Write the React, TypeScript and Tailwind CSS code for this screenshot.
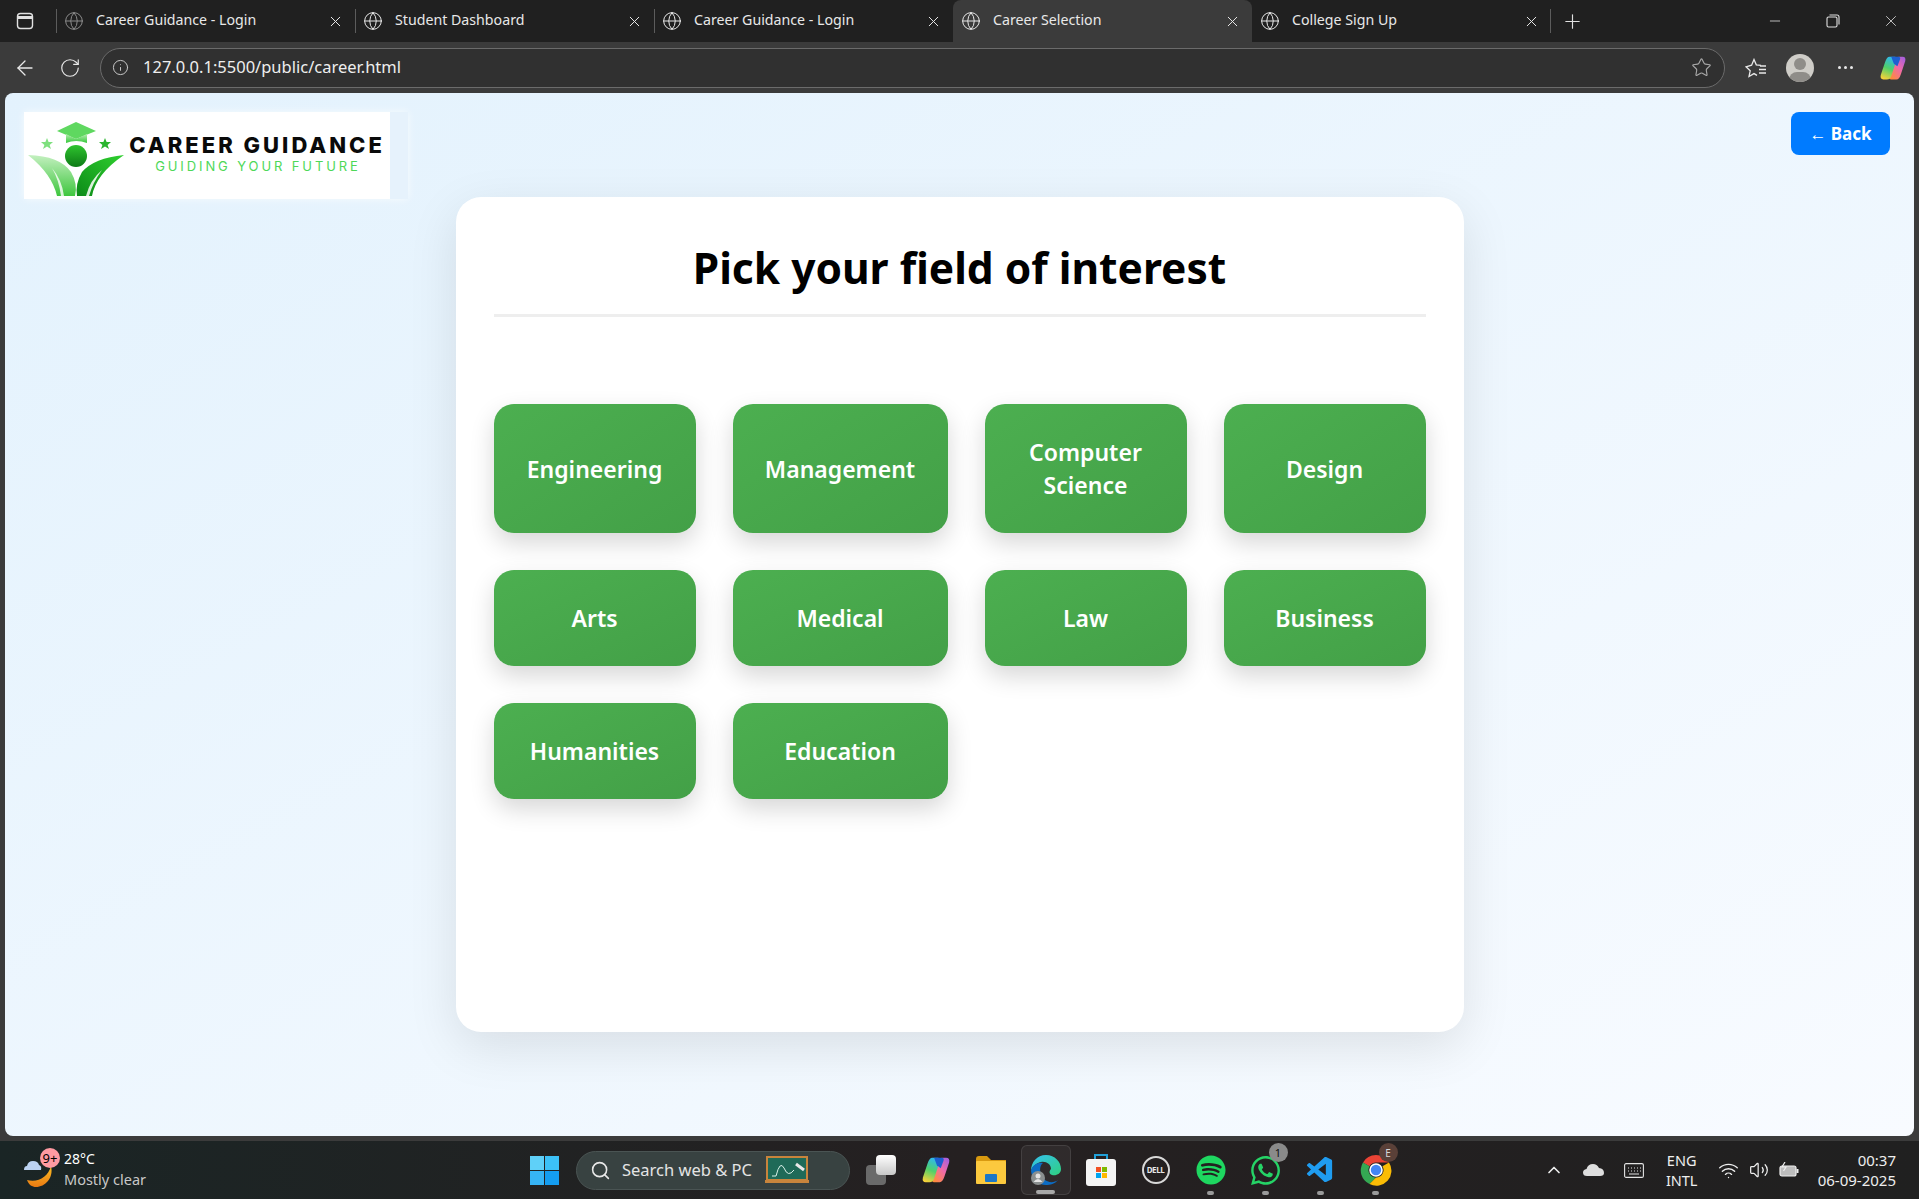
import { ArrowLeft, ChevronUp, Globe, Info, Minus, Plus, RotateCw, Search, Star, Volume2, Wifi, X } from "lucide-react";
import { FaSpotify, FaWhatsapp } from "react-icons/fa";
import { VscVscode } from "react-icons/vsc";

const tabs = [
	{ title: "Career Guidance - Login", dim: true },
	{ title: "Student Dashboard" },
	{ title: "Career Guidance - Login" },
	{ title: "Career Selection", active: true },
	{ title: "College Sign Up" },
];

const fields = ["Engineering", "Management", "Computer Science", "Design", "Arts", "Medical", "Law", "Business", "Humanities", "Education"];

function Logo() {
	return (
		<div className="flex h-[87px] w-[384px] bg-[#e6f2fc] shadow-[0_0_8px_rgba(255,255,255,0.7)]">
			<div className="flex h-full w-[366px] bg-white">
				<svg width="106" height="87" viewBox="0 0 106 87" className="shrink-0">
					<defs>
						<linearGradient id="leafL" x1="0" y1="0" x2="0" y2="1">
							<stop offset="0" stopColor="#c4f0c0" />
							<stop offset="1" stopColor="#3ec63e" />
						</linearGradient>
						<linearGradient id="leafR" x1="1" y1="0" x2="0" y2="1">
							<stop offset="0" stopColor="#2fd02f" />
							<stop offset="1" stopColor="#0c8a18" />
						</linearGradient>
						<linearGradient id="head" x1="0" y1="0" x2="0" y2="1">
							<stop offset="0" stopColor="#2fc42f" />
							<stop offset="1" stopColor="#0d7a16" />
						</linearGradient>
						<linearGradient id="cap" x1="0" y1="0" x2="0" y2="1">
							<stop offset="0" stopColor="#b6eeb0" />
							<stop offset="1" stopColor="#35c83a" />
						</linearGradient>
					</defs>
					<path d="M33 19 L52 10 L72 19 L52 27 Z" fill="#5fd860" />
					<path d="M42 22 L52 27 L63 22 L63 31 Q52 27 42 31 Z" fill="url(#cap)" />
					<polygon points="23,26 24.6,30 29,30 25.6,33 27,37 23,34.6 19,37 20.4,33 17,30 21.4,30" fill="#7fe07f" />
					<polygon points="81,26 82.6,30 87,30 83.6,33 85,37 81,34.6 77,37 78.4,33 75,30 79.4,30" fill="#2bb52f" />
					<ellipse cx="52" cy="44" rx="11" ry="11" fill="url(#head)" />
					<path d="M4 43 Q36 44 47 60 Q54 72 51 84 L33 84 Q28 62 4 43 Z" fill="url(#leafL)" />
					<path d="M100 43 Q70 46 58 60 Q51 72 53 84 L68 84 Q72 62 100 43 Z" fill="url(#leafR)" />
					<path d="M28 56 Q38 68 40 84 L37 84 Q35 68 28 56 Z" fill="#ffffff" opacity="0.8" />
					<path d="M78 58 Q66 68 62 84 L65 84 Q69 70 78 58 Z" fill="#ffffff" opacity="0.85" />
				</svg>
				<div className="flex w-[254px] flex-col items-center pt-[20px] font-['Inter',sans-serif]">
					<span className="text-[22px] leading-[26px] font-extrabold tracking-[3px] text-[#0a0a0a] whitespace-nowrap">CAREER GUIDANCE</span>
					<span className="mt-[-1px] ml-[2px] text-[13px] leading-[18px] tracking-[2.9px] text-[#4ed858] whitespace-nowrap">GUIDING YOUR FUTURE</span>
				</div>
			</div>
		</div>
	);
}

function CopilotIcon({ size }: { size: number }) {
	return (
		<svg width={size} height={size} viewBox="0 0 32 32">
			<defs>
				<linearGradient id="copA" x1="0.6" y1="0" x2="0.3" y2="1">
					<stop offset="0" stopColor="#2fb7f0" />
					<stop offset="0.5" stopColor="#4fd06a" />
					<stop offset="1" stopColor="#f5d13a" />
				</linearGradient>
				<linearGradient id="copB" x1="1" y1="0" x2="0.2" y2="1">
					<stop offset="0" stopColor="#9b5de5" />
					<stop offset="0.5" stopColor="#f06aa8" />
					<stop offset="1" stopColor="#ff8a3d" />
				</linearGradient>
			</defs>
			<path d="M20 29 H14 Q11 29 12 25 L18 7 Q19 3 23 3 H27 Q31 3 30 8 L25 23 Q23 29 20 29 Z" fill="url(#copB)" />
			<path d="M12 3 H18 Q21 3 20 7 L14 25 Q13 29 9 29 H5 Q1 29 2 24 L7 9 Q9 3 12 3 Z" fill="url(#copA)" />
			<path d="M14 3 H22 Q25 3 24 6 L21 14 L17 11 Z" fill="#1d5fd0" />
		</svg>
	);
}

function EdgeIcon() {
	return (
		<svg width="32" height="32" viewBox="0 0 32 32">
			<defs>
				<linearGradient id="edgeA" x1="0" y1="0" x2="1" y2="1">
					<stop offset="0" stopColor="#35c1f1" />
					<stop offset="1" stopColor="#2fd07e" />
				</linearGradient>
			</defs>
			<path d="M16 1 C25 1 31 8 31 15 C31 20 26 22 22 21 C19 20 19 17 21 15 C21 10 16 7 11 8 C6 9 2 13 1 17 C1 8 7 1 16 1 Z" fill="url(#edgeA)" />
			<path d="M1 17 C2 11 8 8 13 9 C9 12 9 20 14 25 C18 29 24 29 28 26 C25 30 20 31 16 31 C8 31 2 25 1 17 Z" fill="#0c6cc4" />
			<circle cx="8" cy="24" r="7" fill="#8a8f8f" />
			<circle cx="8" cy="22" r="2.5" fill="#e4e4e4" />
			<path d="M3.5 28 Q8 22 12.5 28 Z" fill="#e4e4e4" />
		</svg>
	);
}

function ChromeIcon() {
	return (
		<svg width="32" height="32" viewBox="0 0 32 32">
			<path d="M16 1 A15 15 0 0 1 29 8.5 L16 8.5 A7.5 7.5 0 0 0 9.5 12.2 L3 8.5 A15 15 0 0 1 16 1 Z" fill="#ea4335" />
			<path d="M3 8.5 L9.5 12.2 A7.5 7.5 0 0 0 16 23.5 L9.5 30 A15 15 0 0 1 3 8.5 Z" fill="#34a853" />
			<path d="M29 8.5 A15 15 0 0 1 9.5 30 L16 23.5 A7.5 7.5 0 0 0 22.5 12.2 Z" fill="#fbbc05" />
			<circle cx="16" cy="16" r="6" fill="#4285f4" stroke="#fff" strokeWidth="1.6" />
		</svg>
	);
}

function WeatherIcon() {
	return (
		<svg width="30" height="34" viewBox="0 0 30 34">
			<defs>
				<linearGradient id="moon" x1="0" y1="0" x2="0" y2="1">
					<stop offset="0" stopColor="#fbbf24" />
					<stop offset="1" stopColor="#ea7a12" />
				</linearGradient>
			</defs>
			<path d="M27 13 C30 25 21 34 12 34 C8 34 5 32 3 27 C14 30 24 24 27 13 Z" fill="url(#moon)" />
			<path d="M0 17 Q0 13 3 13 Q4 8 9 8 Q14 8 15 12 Q18 13 17 17 Z" fill="#bcd3f2" />
		</svg>
	);
}

function TaskItem({ children, dot, active }: { children: React.ReactNode; dot?: "short" | "long"; active?: boolean }) {
	return (
		<div className={`relative flex h-[50px] w-[50px] items-center justify-center mx-[2.5px] rounded-md ${active ? "bg-white/5 border border-white/10" : ""}`}>
			{children}
			{dot === "short" && <span className="absolute bottom-[0px] h-[4px] w-[7px] rounded-full bg-[#9a9a9a]" />}
			{dot === "long" && <span className="absolute bottom-[0px] h-[4px] w-[19px] rounded-full bg-[#a8a8a8]" />}
		</div>
	);
}

export default function App() {
	return (
		<div className="flex h-[1199px] w-[1919px] flex-col overflow-hidden bg-[#3b3b3b] font-['Noto_Sans',sans-serif]">
			{/* Tab strip */}
			<div className="flex h-[42px] shrink-0 items-center bg-[#202020] text-[#e8e8e8]">
				<div className="flex w-[56px] justify-center pr-[6px]">
					<svg width="18" height="18" viewBox="0 0 18 18" fill="none" stroke="#e0e0e0" strokeWidth="1.4">
						<rect x="1.5" y="1.5" width="15" height="15" rx="3" />
						<path d="M1.5 5.5 H16.5" strokeWidth="3" />
					</svg>
				</div>
				{tabs.map((tab, i) => (
					<div
						key={tab.title + i}
						className={`relative flex h-full w-[299px] items-center pl-[8px] ${tab.active ? "rounded-t-lg bg-[#3b3b3b]" : ""}`}
					>
						{i < 3 && <span className="absolute left-0 top-[9px] h-[24px] w-px bg-[#5c5c5c]" />}
						<Globe size={20} strokeWidth={1.2} className={`mr-[12px] shrink-0 ${tab.dim ? "text-[#8a8a8a]" : "text-[#e8e8e8]"}`} />
						<span className="w-[231px] truncate pb-[3px] text-[14.2px] leading-[22px]">{tab.title}</span>
						<X size={17} strokeWidth={1.4} className="text-[#e8e8e8]" />
					</div>
				))}
				<div className="ml-[-1px] h-[24px] w-px bg-[#5c5c5c]" />
				<Plus size={23} strokeWidth={1.2} className="ml-[10px] text-[#e0e0e0]" />
				<div className="flex-1" />
				<Minus size={16} strokeWidth={1.2} className="text-[#e0e0e0]" />
				<svg width="14" height="14" viewBox="0 0 14 14" fill="none" stroke="#e0e0e0" strokeWidth="1.1" className="ml-[43px]">
					<rect x="1" y="3" width="10" height="10" rx="1.5" />
					<path d="M3.5 1 H11 Q13 1 13 3 V10.5" />
				</svg>
				<X size={18} strokeWidth={1.1} className="ml-[42px] mr-[19px] text-[#e0e0e0]" />
			</div>

			{/* Address bar */}
			<div className="flex h-[51px] shrink-0 items-center text-[#e8e8e8]">
				<ArrowLeft size={24} strokeWidth={1.3} className="ml-[13px]" />
				<RotateCw size={22} strokeWidth={1.3} className="ml-[22px]" />
				<div className="ml-[19px] flex h-[40px] w-[1625px] items-center rounded-full border border-[#6b6b6b] bg-[#303030]">
					<Info size={17} strokeWidth={1.4} className="ml-[11px] text-[#c8c8c8]" />
					<span className="ml-[14px] text-[16.5px] leading-none text-[#eeeeee]">127.0.0.1:5500/public/career.html</span>
					<div className="flex-1" />
					<Star size={21} strokeWidth={1.3} className="mr-[12px] text-[#a8a8a8]" />
				</div>
				<svg width="22" height="20" viewBox="0 0 22 20" fill="none" stroke="#e8e8e8" strokeWidth="1.3" className="ml-[20px]">
					<path d="M16 7.4 L11.3 6.8 L9 1.5 L6.6 7.2 L1 8.8 L5.2 12.8 L4 18.5 L9 15.6 L12 17.4" />
					<path d="M15 8 H21 M14 11.5 H21 M14 15 H21" />
				</svg>
				<div className="relative ml-[19px] h-[28px] w-[28px] overflow-hidden rounded-full bg-[#cfcdc8]">
					<span className="absolute left-[8px] top-[4px] h-[12px] w-[12px] rounded-full bg-[#8f8d89]" />
					<span className="absolute left-[3px] top-[18px] h-[16px] w-[22px] rounded-full bg-[#8f8d89]" />
				</div>
				<div className="ml-[24px] flex gap-[3px]">
					<span className="h-[3px] w-[3px] rounded-full bg-[#e8e8e8]" />
					<span className="h-[3px] w-[3px] rounded-full bg-[#e8e8e8]" />
					<span className="h-[3px] w-[3px] rounded-full bg-[#e8e8e8]" />
				</div>
				<div className="ml-[26px]">
					<CopilotIcon size={28} />
				</div>
			</div>

			{/* Page */}
			<div className="mx-[5px] h-[1043px] shrink-0 rounded-lg bg-gradient-to-br from-[#e3f2fd] to-[#f8fbff]">
				<div className="flex h-[104px] items-start justify-between pl-[19px] pr-[24px] pt-[19px]">
					<Logo />
					<button className="flex h-[43px] w-[99px] items-center justify-center rounded-lg bg-[#007bff] pt-[1px] text-[17px] font-bold text-white">
						← Back
					</button>
				</div>
				<div className="mx-auto h-[835px] w-[1008px] rounded-[25px] bg-white px-[38px] pt-[41px] shadow-[0_15px_50px_rgba(0,0,0,0.1)]">
					<h1 className="border-b-[3px] border-[#eeeeee] pb-[16px] text-center text-[42.5px] leading-[60px] font-bold text-black">
						Pick your field of interest
					</h1>
					<div className="mt-[87px] grid grid-cols-[202px_215px_202px_202px] grid-rows-[129px_96px_96px] gap-[37px]">
						{fields.map((field) => (
							<button
								key={field}
								className="flex items-center justify-center rounded-[20px] bg-gradient-to-br from-[#4caf50] to-[#43a047] px-[20px] pt-[1px] text-center text-[23px] leading-[33px] font-semibold text-white shadow-[0_10px_25px_rgba(0,0,0,0.16)]"
							>
								{field}
							</button>
						))}
					</div>
				</div>
			</div>

			{/* Taskbar */}
			<div className="mt-[5px] flex h-[58px] shrink-0 items-center bg-gradient-to-r from-[#1a2525] via-[#252021] to-[#202020] text-white">
				<div className="relative ml-[24px] flex w-[506px] items-center">
					<WeatherIcon />
					<span className="absolute left-[16px] top-[-1px] flex h-[20px] w-[20px] items-center justify-center rounded-full bg-[#ff9aa2] text-[13px] leading-none text-black">
						9+
					</span>
					<div className="ml-[10px] flex flex-col pb-[2px]">
						<span className="text-[14px] leading-[20px]">28°C</span>
						<span className="text-[14.5px] leading-[20px] text-[#c8c8c8]">Mostly clear</span>
					</div>
				</div>
				<svg width="29" height="29" viewBox="0 0 29 29">
					<rect width="14" height="14" fill="#5fd0f8" />
					<rect x="15" width="14" height="14" fill="#3cc1f7" />
					<rect y="15" width="14" height="14" fill="#36b4f5" />
					<rect x="15" y="15" width="14" height="14" fill="#149df0" />
				</svg>
				<div className="ml-[17px] flex h-[39px] w-[274px] items-center rounded-full border border-[#4a5453] bg-[#384241]">
					<Search size={21} strokeWidth={1.8} className="ml-[13px] text-[#e8e8e8]" />
					<span className="ml-[11px] text-[16.5px] leading-none text-[#e4e4e4]">Search web &amp; PC</span>
					<svg width="46" height="28" viewBox="0 0 46 28" className="ml-[12px]">
						<rect x="3" y="1" width="40" height="23" fill="#1f6a58" stroke="#c8843c" strokeWidth="2" />
						<rect x="1" y="24" width="44" height="3" fill="#c8843c" />
						<path d="M8 20 L12 20 Q16 4 20 12 Q24 22 30 14" fill="none" stroke="#d8f0e8" strokeWidth="1" />
						<path d="M32 8 L40 14" stroke="#e8e8e8" strokeWidth="3" />
					</svg>
				</div>
				<div className="ml-[3px] flex items-center">
					<TaskItem>
						<div className="relative h-[30px] w-[30px]">
							<span className="absolute bottom-0 left-0 h-[20px] w-[20px] rounded-sm bg-[#6a6a6a]" />
							<span className="absolute right-0 top-0 h-[20px] w-[20px] rounded-sm bg-gradient-to-b from-white to-[#c8c8c8]" />
						</div>
					</TaskItem>
					<TaskItem>
						<CopilotIcon size={30} />
					</TaskItem>
					<TaskItem>
						<svg width="30" height="28" viewBox="0 0 30 28">
							<path d="M0 3 Q0 0 3 0 H11 L15 4 H30 V10 H0 Z" fill="#d99a10" />
							<rect y="5" width="30" height="23" rx="1" fill="#fcc93e" />
							<rect x="9" y="18" width="12" height="8" rx="1" fill="#1b77c8" />
						</svg>
					</TaskItem>
					<TaskItem active dot="long">
						<EdgeIcon />
					</TaskItem>
					<TaskItem>
						<svg width="30" height="34" viewBox="0 0 30 34">
							<path d="M9 7 V2 H21 V7" fill="none" stroke="#21a0d8" strokeWidth="2" />
							<rect y="6" width="30" height="27" rx="3" fill="#f4f4f4" />
							<rect x="10" y="14" width="5" height="5" fill="#f25022" />
							<rect x="16" y="14" width="5" height="5" fill="#7fba00" />
							<rect x="10" y="20" width="5" height="5" fill="#00a4ef" />
							<rect x="16" y="20" width="5" height="5" fill="#ffb900" />
						</svg>
					</TaskItem>
					<TaskItem>
						<div className="flex h-[28px] w-[28px] items-center justify-center rounded-full border-2 border-[#d8d8d8] text-[8px] font-bold tracking-tighter text-[#e8e8e8]">
							DELL
						</div>
					</TaskItem>
					<TaskItem dot="short">
						<FaSpotify size={30} className="text-[#1ed760]" />
					</TaskItem>
					<TaskItem dot="short">
						<FaWhatsapp size={33} className="text-[#25d366]" />
						<span className="absolute right-[3px] top-[-2px] flex h-[19px] w-[19px] items-center justify-center rounded-full bg-[#8a8a8a] text-[11px] leading-none text-[#111111]">
							1
						</span>
					</TaskItem>
					<TaskItem dot="short">
						<VscVscode size={31} className="text-[#1f9cf0]" />
					</TaskItem>
					<TaskItem dot="short">
						<ChromeIcon />
						<span className="absolute right-[3px] top-[-2px] flex h-[19px] w-[19px] items-center justify-center rounded-full bg-[#5a4038] text-[10px] leading-none text-[#d8d8d8]">
							E
						</span>
					</TaskItem>
				</div>
				<div className="flex-1" />
				<ChevronUp size={20} strokeWidth={2} className="text-[#eeeeee]" />
				<svg width="21" height="14" viewBox="0 0 21 14" className="ml-[19px]">
					<path d="M4 13 Q0 13 0 9.5 Q0 6.5 3.5 6 Q5 1 10 1 Q14 1 16 5 Q21 5.5 21 10 Q21 13 17 13 Z" fill="#dedede" />
				</svg>
				<svg width="20" height="15" viewBox="0 0 20 15" fill="none" stroke="#e4e4e4" strokeWidth="1.1" className="ml-[20px]">
					<rect x="0.6" y="0.6" width="18.8" height="13.8" rx="1.5" />
					<path d="M4 5 H5 M7 5 H8 M10 5 H11 M13 5 H14 M16 5 H17 M4 8 H5 M7 8 H8 M10 8 H11 M13 8 H14 M16 8 H17 M5 11 H15" />
				</svg>
				<div className="ml-[21px] flex w-[34px] flex-col items-center text-[14.5px] leading-[20px] text-[#eeeeee]">
					<span>ENG</span>
					<span>INTL</span>
				</div>
				<Wifi size={21} strokeWidth={1.6} className="ml-[19px] text-[#eeeeee]" />
				<Volume2 size={20} strokeWidth={1.5} className="ml-[10px] text-[#eeeeee]" />
				<svg width="21" height="16" viewBox="0 0 21 16" fill="none" stroke="#eeeeee" strokeWidth="1.2" className="ml-[10px]">
					<rect x="1" y="4" width="16" height="10" rx="2" fill="#bdbdbd" />
					<path d="M18.5 7 V11" strokeWidth="2" />
					<path d="M6 0 L3 5 H7 L4.5 9" />
				</svg>
				<div className="ml-[18px] mr-[23px] flex flex-col items-end text-[15px] leading-[20px] text-[#eeeeee]">
					<span>00:37</span>
					<span>06-09-2025</span>
				</div>
			</div>
		</div>
	);
}
